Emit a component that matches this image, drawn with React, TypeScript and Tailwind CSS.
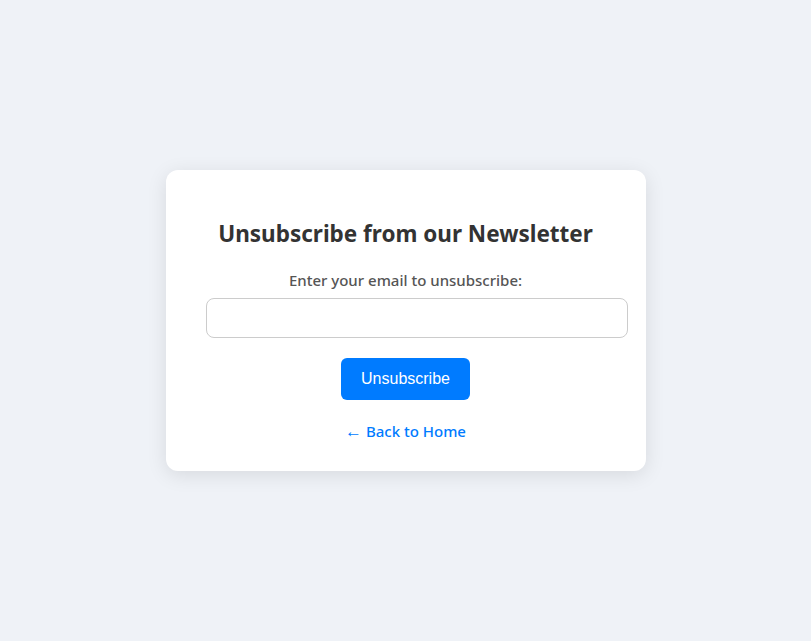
import React from 'react';

export default function App() {
    return (
        <div className="min-h-screen w-full bg-[#eff2f7] flex items-center justify-center font-['Noto_Sans',sans-serif]">
            <div className="w-[480px] bg-white rounded-[12px] shadow-[0_4px_20px_rgba(0,0,0,0.1)] px-[40px] pt-[48px] pb-[28px] text-center">
                <h2 className="text-[22.5px] leading-[32px] font-bold text-[#333]">
                    Unsubscribe from our Newsletter
                </h2>
                <form className="mt-[18px]" onSubmit={(e) => e.preventDefault()}>
                    <label className="block text-[15px] leading-[24px] font-medium text-[#555] mb-[6px]">
                        Enter your email to unsubscribe:
                    </label>
                    <input
                        type="email"
                        className="block w-[422px] h-[40px] px-[10px] border border-[#ccc] rounded-[8px] outline-none"
                    />
                    <button
                        type="submit"
                        className="mt-[20px] h-[42px] px-[20px] bg-[#007bff] text-white rounded-[6px] text-[16px] font-['Liberation_Sans',Arial,sans-serif]"
                    >
                        Unsubscribe
                    </button>
                </form>
                <a href="#" className="block mt-[19px] text-[15px] leading-[24px] font-medium text-[#007bff]">
                    <span className="text-[17px]">←</span> Back to Home
                </a>
            </div>
        </div>
    );
}
